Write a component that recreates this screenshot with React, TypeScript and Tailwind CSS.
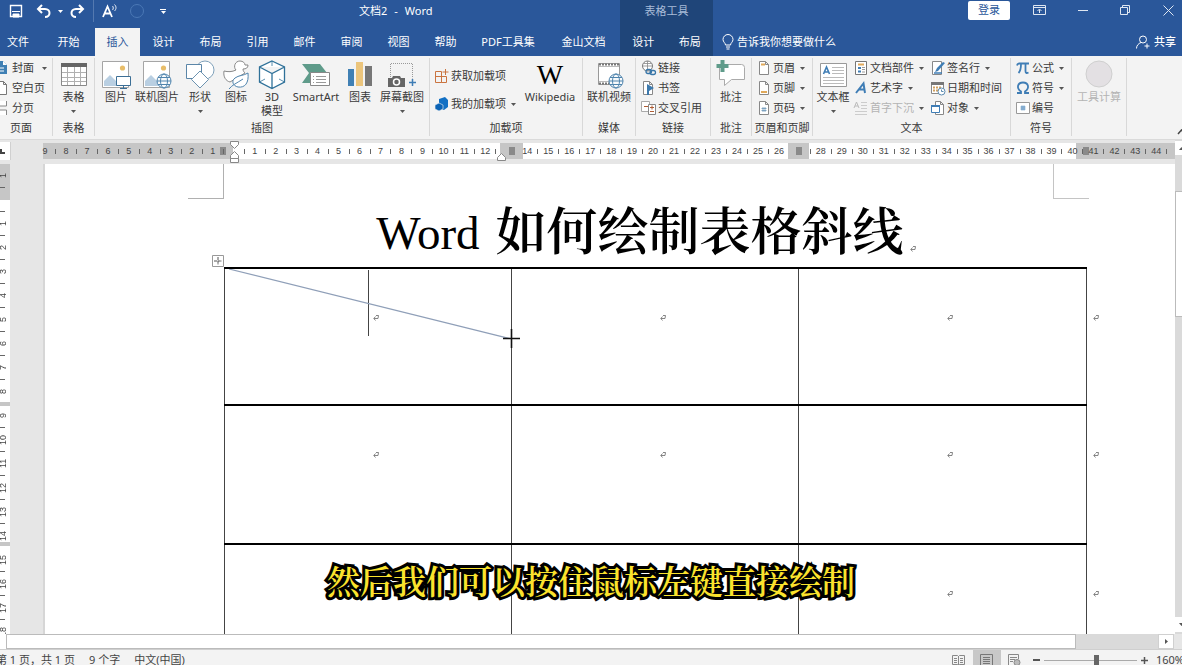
import type { ReactNode } from 'react';
import { clsx } from 'clsx';

const Caret = ({ className }: { className?: string }) => (
  <svg viewBox="0 0 5 3" className={clsx('h-[3px] w-[5px] shrink-0', className)} fill="#555">
    <path d="M0 0h5L2.5 3z" />
  </svg>
);

function Icon({ size = 'small', children }: { size?: 'small' | 'big'; children: ReactNode }) {
  return (
    <svg
      viewBox={size === 'big' ? '0 0 30 30' : '0 0 16 16'}
      className={clsx('shrink-0', size === 'big' ? 'h-[30px] w-[30px]' : 'h-4 w-4')}
      fill="none"
    >
      {children}
    </svg>
  );
}

const Globe = ({ x, y, r }: { x: number; y: number; r: number }) => (
  <g stroke="#4f84ad" strokeWidth="1">
    <circle cx={x} cy={y} r={r} fill="#f7fafc" />
    <ellipse cx={x} cy={y} rx={r / 2} ry={r} />
    <path d={`M${x - r} ${y}h${2 * r}M${x - r + 1} ${y - r / 2}h${2 * r - 2}M${x - r + 1} ${y + r / 2}h${2 * r - 2}`} />
  </g>
);

const Picture = () => (
  <>
    <path d="M1.500 1.500h26v26h-26z" fill="#fff" stroke="#a5a5a5" />
    <circle cx="21.500" cy="8" r="2.600" fill="#e8bd69" />
    <path d="M3 26V21l6-6 7 7v4z" fill="#b9cfe2" />
  </>
);

const PageShape = () => <path d="M3.500 1.500h6l3 3v10h-9z M9.500 1.500v3h3" fill="#fff" stroke="#888" />;

const icons = {
  cover: (
    <Icon>
      <path d="M3 1h8l4 4v9H3z" fill="#4080b4" />
      <path d="M11 1v4h4" fill="#fff" />
      <path d="M6 8h6M6 11h6" stroke="#fff" />
    </Icon>
  ),
  blank: (
    <Icon>
      <path d="M4.500 1.500h7l3 3v10h-10zM11.500 1.500v3h3" fill="#fff" stroke="#777" />
    </Icon>
  ),
  pageBreak: (
    <Icon>
      <path d="M1.500 1v5h13V1M1.500 15v-5h13v5" fill="#fff" stroke="#888" />
    </Icon>
  ),
  table: (
    <Icon size="big">
      <path d="M2.500 3.500h25v22h-25z" fill="#fff" stroke="#888" />
      <path d="M2 3h26v4H2z" fill="#666" />
      <path d="M3 12.500h24M3 17.500h24M3 21.500h24M8.500 7v18M15.500 7v18M21.500 7v18" stroke="#b0b0b0" />
    </Icon>
  ),
  picture: (
    <Icon size="big">
      <Picture />
      <path d="M15.500 16.500h14v9h-14z" fill="#fff" stroke="#3c6f96" />
      <path d="M22.500 26v3M19 28.500h7" stroke="#3c6f96" />
    </Icon>
  ),
  onlinePicture: (
    <Icon size="big">
      <Picture />
      <Globe x={22} y={21} r={7} />
    </Icon>
  ),
  shapes: (
    <Icon size="big">
      <circle cx="20" cy="10" r="9" fill="#fff" stroke="#7ea0ba" />
      <path d="M1.500 4.500h15v14h-15z" fill="#fff" stroke="#5b86a8" />
      <path d="M15 11l8.500 8.500L15 28l-8.500-8.500z" fill="#fff" stroke="#6d93b0" />
    </Icon>
  ),
  iconSet: (
    <Icon size="big">
      <path d="M3 11c4 1 8 1 12-1-3-3-1-9 4-9 3 0 5 2 5 4h3c0 3-2 4-5 4 0 2 1 3 2 4L9 22c-4-1-7-5-6-11z" stroke="#888" fill="#fff" />
      <path d="M27 13c1 10-3 15-10 14-5-1-7-6-3-9s8-2 13-5zM8 29c3-4 8-6 14-10" stroke="#4f84ad" fill="#fff" />
    </Icon>
  ),
  model: (
    <Icon size="big">
      <path d="M15 1l12.500 6v15L15 28.500 2.500 22V7zM2.500 7L15 13.500 27.500 7M15 13.500v15" fill="#fff" stroke="#2f7199" strokeWidth="1.300" />
      <path d="M15 1v5M2.500 22L8 19M27.500 22L22 19" stroke="#2f7199" strokeWidth="0.800" />
    </Icon>
  ),
  smartArt: (
    <Icon size="big">
      <path d="M1 4h18l7 9-7 10H1l7-10z" fill="#5f9b8a" />
      <path d="M9.500 12.500h19v13h-19z" fill="#fff" stroke="#888" />
      <path d="M15 16.500h10M15 19.500h10M15 22.500h10M12 16.500h1M12 19.500h1M12 22.500h1" stroke="#999" />
    </Icon>
  ),
  chart: (
    <Icon size="big">
      <path d="M3 9h6v17H3z" fill="#4080b4" />
      <path d="M11 2h7v24h-7z" fill="#ecc57c" />
      <path d="M20 6h7v20h-7z" fill="#777" />
    </Icon>
  ),
  screenshot: (
    <Icon size="big">
      <path d="M3.500 17V3.500h22v15" stroke="#999" strokeDasharray="1 1" />
      <path d="M1 18h4l1-2h7l1 2h4v9H1z" fill="#666" />
      <circle cx="9.500" cy="22" r="3" stroke="#fff" strokeWidth="1.500" />
      <path d="M25.500 19v7M22 22.500h7" stroke="#3f7db5" strokeWidth="1.500" />
    </Icon>
  ),
  getAddin: (
    <Icon>
      <path d="M1.500 3.500h6v11h-6zM7.500 8.500h5v6h-5zM1.500 8.500h6M11.500 1v6M8.500 4h6" stroke="#ca7440" />
    </Icon>
  ),
  myAddin: (
    <Icon>
      <path d="M5 3l6-2 3 3v7l-4 3-5-2z" fill="#1270c4" />
      <path d="M1 9l4-2 4 2v4l-4 2-4-2z" fill="#0b63b5" stroke="#f3f3f3" strokeWidth="0.600" />
    </Icon>
  ),
  video: (
    <Icon size="big">
      <path d="M4.500 3.500h21v21h-21z" fill="#fff" stroke="#999" />
      <path d="M5 4.500h21M5 23.500h12" stroke="#777" strokeWidth="2" strokeDasharray="2 1" />
      <path d="M5 6.500h20M5 21.500h12" stroke="#bbb" />
      <Globe x={22} y={21} r={7} />
    </Icon>
  ),
  link: (
    <Icon>
      <circle cx="6.500" cy="6" r="5" fill="#fff" stroke="#777" />
      <path d="M1.500 6h10M6.500 1v10M3 3.500h7" stroke="#888" strokeWidth="0.800" />
      <path d="M5 11.500a2 2 0 012-2h1.500a2 2 0 010 4H7a2 2 0 01-2-2zM9 12.500a2 2 0 012-2h1.500a2 2 0 010 4H11a2 2 0 01-2-2z" stroke="#3876a8" strokeWidth="1.300" />
    </Icon>
  ),
  bookmark: (
    <Icon>
      <path d="M2.500 1.500h6l3 3v10h-9zM8.500 1.500v3h3" fill="#fff" stroke="#888" />
      <path d="M6 4l7 4-5 3v4H6z" fill="#3c79ad" />
    </Icon>
  ),
  crossRef: (
    <Icon>
      <path d="M.500 1.500h8v10h-8z" fill="#fff" stroke="#aaa" />
      <path d="M7.500 4.500h7v10h-7z" fill="#fff" stroke="#888" />
      <path d="M3 6.500h4M9 7.500h4M11 5.500v4M9 11.500h4" stroke="#b05d34" />
    </Icon>
  ),
  comment: (
    <Icon size="big">
      <path d="M3.500 4.500h22a3 3 0 013 3v12h-13l-7 6v-6h-5z" fill="#fff" stroke="#aaa" />
      <path d="M6.500 0v12M.500 6h12" stroke="#5f9b8a" strokeWidth="4" />
    </Icon>
  ),
  headerPage: (
    <Icon>
      <PageShape />
      <path d="M5 4.500h4" stroke="#e0a95a" strokeWidth="2" />
    </Icon>
  ),
  footerPage: (
    <Icon>
      <PageShape />
      <path d="M5 12h6" stroke="#e0a95a" strokeWidth="2" />
    </Icon>
  ),
  pageNumber: (
    <Icon>
      <PageShape />
      <path d="M7 7v5M9 7v5M5.500 8.500h5M5.500 10.500h5" stroke="#5b8bb0" strokeWidth="0.700" />
    </Icon>
  ),
  textBox: (
    <Icon size="big">
      <path d="M2.500 3.500h26v23h-26z" fill="#fff" stroke="#999" />
      <path d="M5.500 14L8.500 7l3 7M6.500 12h4" stroke="#3f7db5" strokeWidth="1.600" />
      <path d="M14 7.500h12M14 10.500h12M14 13.500h12M5 17.500h21M5 20.500h21M5 23.500h21" stroke="#bbb" />
    </Icon>
  ),
  parts: (
    <Icon>
      <path d="M2.500 1.500h11v13h-11z" fill="#fff" stroke="#777" />
      <path d="M5 4.500h6" stroke="#e0a95a" strokeWidth="2" />
      <path d="M5 8h3M5 11.500h3" stroke="#3f7db5" strokeWidth="2" />
      <path d="M9 7.500h3M9 9.500h3M9 12h3" stroke="#999" />
    </Icon>
  ),
  wordArt: (
    <Icon>
      <path d="M3 13L10.500 3.500 12 13M6 9.500h6" stroke="#3f7db5" strokeWidth="2" />
    </Icon>
  ),
  dropCap: (
    <Icon>
      <path d="M1 8l2.500-6L6 8M2 6h3" stroke="#bbb" />
      <path d="M8 2.500h6M8 5.500h6M8 8.500h6M2 11.500h12M2 14.500h12" stroke="#ccc" />
    </Icon>
  ),
  signature: (
    <Icon>
      <path d="M2.500 1.500h9v13h-9z" fill="#fff" stroke="#888" />
      <path d="M5 12l2-4 6-6 2 1-7 8z" fill="#3f7db5" />
      <path d="M4 13h8" stroke="#3f7db5" strokeWidth="1.500" />
    </Icon>
  ),
  dateTime: (
    <Icon>
      <path d="M1.500 2.500h12v11h-12z" fill="#fff" stroke="#888" />
      <path d="M1 2h13v3H1z" fill="#777" />
      <path d="M3 7.500h8M3 10.500h5" stroke="#d0a060" strokeWidth="2" strokeDasharray="2 1" />
      <circle cx="11.500" cy="11.500" r="3.500" fill="#fff" stroke="#5b8bb0" />
      <path d="M11.500 9.500v2h2" stroke="#5b8bb0" />
    </Icon>
  ),
  object: (
    <Icon>
      <path d="M5.500 1.500h5l3 3v10h-8zM10.500 1.500v3h3" fill="#fff" stroke="#888" />
      <path d="M1.500 5.500h8v7h-8z" fill="#fff" stroke="#3f7db5" />
      <path d="M1 6h9" stroke="#3f7db5" strokeWidth="2" />
    </Icon>
  ),
  equation: (
    <Icon>
      <path d="M2 5.500c.500-1.500 1-2 2-2h10M6 4c0 4-.5 7-2.500 9M10.500 4v7c0 2 1 2.500 3 1.500" stroke="#3f7db5" strokeWidth="1.800" />
    </Icon>
  ),
  symbol: (
    <Icon>
      <path d="M2 13h4v-1.500C1 8 2.500 2.500 8 2.500s7 5.500 2 9V13h4" stroke="#3f7db5" strokeWidth="1.800" />
    </Icon>
  ),
  numbering: (
    <Icon>
      <path d="M1.500 2.500h13v11h-13z" fill="#fff" stroke="#999" />
      <path d="M7 5.500v5M9 5.500v5M5.500 7h5M5.500 9h5" stroke="#3f7db5" strokeWidth="0.800" />
    </Icon>
  ),
  calc: (
    <Icon size="big">
      <circle cx="15" cy="14" r="13" fill="#e3e0e3" stroke="#cfcfcf" />
    </Icon>
  ),
};

type BigProps = { icon: ReactNode; label: string; second?: string; caret?: boolean; className?: string; disabled?: boolean };

function BigButton({ icon, label, second, caret, className, disabled }: BigProps) {
  return (
    <button
      type="button"
      disabled={disabled}
      className={clsx('flex flex-col items-center pt-0.5 leading-[14px] whitespace-nowrap', disabled && 'text-[#b4b4b4]', className)}
    >
      {icon}
      <span>{label}</span>
      {second && <span>{second}</span>}
      {caret && <Caret className="mt-1.5" />}
    </button>
  );
}

type SmallProps = { icon: ReactNode; label: string; caret?: boolean; disabled?: boolean; className?: string };

function SmallButton({ icon, label, caret, disabled, className = 'h-5' }: SmallProps) {
  return (
    <button
      type="button"
      disabled={disabled}
      className={clsx('flex items-center gap-px whitespace-nowrap', disabled && 'text-[#b4b4b4]', className)}
    >
      {icon}
      <span>{label}</span>
      {caret && <Caret className="ml-1" />}
    </button>
  );
}

function Group({ label, className, children }: { label?: string; className: string; children: ReactNode }) {
  return (
    <section className={clsx('mt-0.5 mb-[3px] flex shrink-0 flex-col border-r border-[#d8d8d8]', className)}>
      <div className="flex h-[66px]">{children}</div>
      <h2 className="text-center leading-4 whitespace-nowrap">{label}</h2>
    </section>
  );
}

const tabs = ['设计', '布局', '引用', '邮件', '审阅', '视图', '帮助'];

function TitleBar() {
  return (
    <div className="flex h-7 text-white">
      <div className="flex w-[359px] shrink-0 items-start">
        <div className="flex h-[22px] items-center border-r border-[#5479b0] pr-2 pl-2">
          <button type="button" aria-label="保存" className="mr-3">
            <svg viewBox="0 0 16 16" className="h-4 w-4" fill="none" stroke="#fff">
              <path d="M2.500 2.500h11v11h-11z" strokeWidth="1.400" />
              <path d="M4 8.500h8M5 11h6v3H5z" fill="#fff" />
            </svg>
          </button>
          <button type="button" aria-label="撤消">
            <svg viewBox="0 0 16 16" className="h-4 w-4" fill="none" stroke="#fff" strokeWidth="2">
              <path d="M6 2L2 6l4 4M2 6h7c6 0 6 8 0 8" />
            </svg>
          </button>
          <Caret className="mx-1.5 brightness-[4]" />
          <button type="button" aria-label="恢复">
            <svg viewBox="0 0 16 16" className="h-4 w-4" fill="none" stroke="#fff" strokeWidth="2">
              <path d="M10 2l4 4-4 4M14 6H7c-6 0-6 8 0 8" />
            </svg>
          </button>
        </div>
        <div className="flex h-[22px] items-center gap-3 pl-2">
          <button type="button" aria-label="朗读">
            <svg viewBox="0 0 16 16" className="h-4 w-4" fill="none" stroke="#fff">
              <path d="M1 14L5.500 3.500 10 14M2.500 10.500h6" strokeWidth="1.800" />
              <path d="M10.500 3c1 1 1 3 0 4M12.500 1.500c2 2 2 4.500 0 6.500" strokeWidth="0.900" />
            </svg>
          </button>
          <span className="h-[14px] w-[14px] rounded-full border border-[#4a78b5]" />
          <button type="button" aria-label="自定义" className="ml-1 flex flex-col items-center gap-px">
            <span className="h-px w-1.5 bg-white" />
            <Caret className="brightness-[4]" />
          </button>
        </div>
      </div>
      <h1 className="flex w-[261px] shrink-0 gap-[7px] text-[11px] leading-[22px]">
        <span>文档2</span>
        <span>-</span>
        <span>Word</span>
      </h1>
      <p className="w-[93px] shrink-0 bg-[#1f4579] text-center leading-[22px] text-[#a9bcd8]">表格工具</p>
      <div className="flex flex-1 items-start justify-end">
        <button type="button" className="mt-px mr-2 h-[19px] w-[42px] rounded-xs bg-white text-[#2a579a]">
          登录
        </button>
        <div className="-mr-2 flex h-[21px] items-center">
          <button type="button" aria-label="功能区显示选项" className="flex w-[43px] justify-center">
            <svg viewBox="0 0 13 11" className="h-[11px] w-[13px]" fill="none" stroke="#dfe7f2">
              <path d="M.500.500h12v9H.500zM.500 2.500h12M6.500 8V4.500M4.500 6l2-2 2 2" />
            </svg>
          </button>
          <button type="button" aria-label="最小化" className="flex w-[43px] justify-center">
            <span className="h-px w-[10px] bg-[#dfe7f2]" />
          </button>
          <button type="button" aria-label="还原" className="flex w-[43px] justify-center">
            <svg viewBox="0 0 11 11" className="h-[11px] w-[11px]" fill="none" stroke="#dfe7f2">
              <path d="M.500 2.500h7v7h-7zM2.500 2.500v-2h7v7h-2" />
            </svg>
          </button>
          <button type="button" aria-label="关闭" className="flex w-[43px] justify-center">
            <svg viewBox="0 0 11 11" className="h-[11px] w-[11px]" fill="none" stroke="#dfe7f2">
              <path d="M.500.500l10 10M10.500.500l-10 10" />
            </svg>
          </button>
        </div>
      </div>
    </div>
  );
}

function TabBar() {
  return (
    <nav className="flex h-7 whitespace-nowrap text-white">
      <button type="button" className="-ml-1.5 w-12 shrink-0">文件</button>
      <button type="button" className="w-[53px] shrink-0">开始</button>
      <button type="button" className="w-[45px] shrink-0 bg-[#f3f3f3] text-[#2a579a]">插入</button>
      {tabs.map((tab) => (
        <button type="button" key={tab} className="w-[47px] shrink-0">
          {tab}
        </button>
      ))}
      <button type="button" className="w-[78px] shrink-0">PDF工具集</button>
      <button type="button" className="w-[73px] shrink-0">金山文档</button>
      <div className="flex w-[93px] shrink-0 bg-[#1f4579]">
        <button type="button" className="flex-1">设计</button>
        <button type="button" className="flex-1">布局</button>
      </div>
      <button type="button" className="ml-2 flex items-center gap-0.5">
        <svg viewBox="0 0 14 16" className="h-4 w-[14px]" fill="none" stroke="#fff">
          <path d="M4.500 11c0-2-2.500-3-2.500-5.500a5 5 0 0110 0C12 8 9.500 9 9.500 11zM5 13h4M5.500 15h3" />
        </svg>
        告诉我你想要做什么
      </button>
      <button type="button" className="mr-1.5 ml-auto flex items-center gap-1">
        <svg viewBox="0 0 14 14" className="h-[14px] w-[14px]" fill="none" stroke="#fff">
          <circle cx="7" cy="4.500" r="3.500" />
          <path d="M.500 13.500c0-3 2-5 4.500-6M8.500 11h5M11 8.500v5" />
        </svg>
        <span className="font-medium">共享</span>
      </button>
    </nav>
  );
}

function Ribbon() {
  return (
    <div className="flex h-[84px] border-b border-[#dadada] bg-[#f3f3f3] text-[#3a3a3a]">
      <Group label="页面" className="w-[53px] -indent-[10px]">
        <div className="-ml-2 indent-0 [&>button]:gap-1">
          <SmallButton icon={icons.cover} label="封面" caret />
          <SmallButton icon={icons.blank} label="空白页" />
          <SmallButton icon={icons.pageBreak} label="分页" />
        </div>
      </Group>
      <Group label="表格" className="w-[42px]">
        <BigButton icon={icons.table} label="表格" caret className="w-full" />
      </Group>
      <Group label="插图" className="w-[335px]">
        <BigButton icon={icons.picture} label="图片" className="ml-[3px] w-9" />
        <BigButton icon={icons.onlinePicture} label="联机图片" className="w-[46px]" />
        <BigButton icon={icons.shapes} label="形状" caret className="w-10" />
        <BigButton icon={icons.iconSet} label="图标" className="w-8" />
        <BigButton icon={icons.model} label="3D" second="模型" className="w-10" />
        <BigButton icon={icons.smartArt} label="SmartArt" className="w-12" />
        <BigButton icon={icons.chart} label="图表" className="w-10" />
        <BigButton icon={icons.screenshot} label="屏幕截图" caret className="w-11" />
      </Group>
      <Group label="加载项" className="w-[153px]">
        <div className="w-[92px] pt-1 pl-1">
          <SmallButton icon={icons.getAddin} label="获取加载项" className="h-7" />
          <SmallButton icon={icons.myAddin} label="我的加载项" caret className="h-7" />
        </div>
        <BigButton
          icon={<span className="h-[30px] font-['Liberation_Serif',serif] text-[28px] leading-[30px] text-black">W</span>}
          label="Wikipedia"
          className="w-14"
        />
      </Group>
      <Group label="媒体" className="w-[53px]">
        <BigButton icon={icons.video} label="联机视频" className="w-full" />
      </Group>
      <Group label="链接" className="w-[75px]">
        <div className="pl-[5px]">
          <SmallButton icon={icons.link} label="链接" />
          <SmallButton icon={icons.bookmark} label="书签" />
          <SmallButton icon={icons.crossRef} label="交叉引用" />
        </div>
      </Group>
      <Group label="批注" className="w-[41px]">
        <BigButton icon={icons.comment} label="批注" className="w-full" />
      </Group>
      <Group label="页眉和页脚" className="w-[61px]">
        <div className="pl-1">
          <SmallButton icon={icons.headerPage} label="页眉" caret />
          <SmallButton icon={icons.footerPage} label="页脚" caret />
          <SmallButton icon={icons.pageNumber} label="页码" caret />
        </div>
      </Group>
      <Group label="文本" className="w-[198px]">
        <BigButton icon={icons.textBox} label="文本框" caret className="w-10" />
        <div className="w-[77px]">
          <SmallButton icon={icons.parts} label="文档部件" caret />
          <SmallButton icon={icons.wordArt} label="艺术字" caret />
          <SmallButton icon={icons.dropCap} label="首字下沉" caret disabled />
        </div>
        <div>
          <SmallButton icon={icons.signature} label="签名行" caret />
          <SmallButton icon={icons.dateTime} label="日期和时间" />
          <SmallButton icon={icons.object} label="对象" caret />
        </div>
      </Group>
      <Group label="符号" className="w-[61px]">
        <div className="pl-1">
          <SmallButton icon={icons.equation} label="公式" caret />
          <SmallButton icon={icons.symbol} label="符号" caret />
          <SmallButton icon={icons.numbering} label="编号" />
        </div>
      </Group>
      <Group className="w-[55px]">
        <BigButton icon={icons.calc} label="工具计算" disabled className="w-full" />
      </Group>
      <button type="button" aria-label="折叠功能区" className="-mr-1 ml-auto self-end pb-1">
        <svg viewBox="0 0 9 6" className="h-1.5 w-[9px]" fill="none" stroke="#444" strokeWidth="1.500">
          <path d="M1 5l3.500-4L8 5" />
        </svg>
      </button>
    </div>
  );
}

const columnMarks = [0, 13, 27];
const rulerNumbers = Array.from({ length: 54 }, (_, i) => i - 9);

const RulerGrip = ({ className }: { className?: string }) => <span className={clsx('h-2 w-1.5 bg-[#8a8a8a]', className)} />;

function HorizontalRuler() {
  return (
    <div className="flex h-6 shrink-0 bg-[#e6e6e6] pt-[3px]">
      <button type="button" aria-label="制表符" className="mr-8 -mt-px flex h-[18px] w-[11px] items-center border-r border-[#d0d0d0] bg-white">
        <svg viewBox="0 0 5 5" className="h-[5px] w-[5px]" fill="none" stroke="#444" strokeWidth="2">
          <path d="M1 0v4h4" />
        </svg>
      </button>
      <div className="relative h-4 flex-1">
        <div className="flex h-full">
          <div className="flex flex-[190] items-center justify-end bg-[#c6c6c6]"><RulerGrip className="mr-[7px]" /></div>
          <div className="flex-[267] bg-white" />
          <div className="flex flex-[23] items-center justify-center bg-[#c6c6c6]"><RulerGrip /></div>
          <div className="flex-[265] bg-white" />
          <div className="flex flex-[21] items-center justify-center bg-[#c6c6c6]"><RulerGrip /></div>
          <div className="flex-[267] bg-white" />
          <div className="flex flex-[99] items-center bg-[#c6c6c6]"><RulerGrip className="ml-[7px]" /></div>
        </div>
        <div className="absolute inset-y-0 right-2 -left-2 flex font-['Liberation_Sans',sans-serif] text-[9px] leading-4 text-[#444]">
          {rulerNumbers.map((n) => (
            <span key={n} className="flex flex-1 items-center">
              <span className="flex-1 text-center">{columnMarks.includes(n) ? '' : Math.abs(n)}</span>
              <span className={clsx('h-[5px] w-px', n === 13 || n === 26 ? 'bg-transparent' : 'bg-[#666]')} />
            </span>
          ))}
        </div>
        <svg viewBox="0 0 9 24" className="absolute -top-[3px] left-[187px] h-6 w-[9px]" fill="#fff" stroke="#888">
          <path d="M.500 1.500h8v3l-4 4-4-4zM.500 18.500v-3l4-4 4 4v3zM.500 18.500h8v4h-8z" />
        </svg>
        <svg viewBox="0 0 9 8" className="absolute top-[10px] left-[454px] h-2 w-[9px]" fill="#fff" stroke="#888">
          <path d="M.500 7.500v-3l4-4 4 4v3z" />
        </svg>
      </div>
    </div>
  );
}

function VerticalRuler() {
  return (
    <div className="relative w-[10px] shrink-0 overflow-hidden bg-white">
      <div className="flex h-full flex-col">
        <div className="h-9 bg-[#c6c6c6]" />
        <div className="mt-[202px] h-1 bg-[#c6c6c6]" />
        <div className="mt-[136px] h-1 bg-[#c6c6c6]" />
      </div>
      <div className="absolute inset-x-0 top-0 font-['Liberation_Sans',sans-serif] text-[9px] leading-[10px] text-[#444]">
        {Array.from({ length: 20 }, (_, i) => i - 1).map((n) => (
          <div key={n} className="flex h-6 flex-col">
            <span className="-ml-0.5 flex w-[10px] flex-1 rotate-180 items-center justify-center [writing-mode:vertical-rl]">
              {n === 0 ? '' : Math.abs(n)}
            </span>
            <span className={clsx('h-px w-[5px]', n === 8 || n === 14 ? 'bg-transparent' : 'bg-[#666]')} />
          </div>
        ))}
      </div>
    </div>
  );
}

const ParagraphMark = ({ className }: { className?: string }) => (
  <svg viewBox="0 0 6 6" className={clsx('h-1.5 w-1.5', className)} fill="none" stroke="#777" strokeWidth="0.900">
    <path d="M3 .500h2.500L5 3.500H1M2.500 1.500L.800 3.500l1.700 2" />
  </svg>
);

const rowHeights = ['h-[137px]', 'h-[139px]', 'h-[139px]'];

function DocumentPage() {
  return (
    <article className="relative ml-[33px] flex-1 overflow-hidden border-l-2 border-[#d6d6d6] bg-white">
      <div className="flex h-[35px] justify-between pr-[86px] pl-[143px]">
        <span className="w-9 border-r border-b border-[#b0b0b0]" />
        <span className="w-9 border-b border-l border-[#c4c4c4]" />
      </div>
      <h2 className="flex h-[68px] items-center justify-center pr-[107px] pl-[179px] text-[51px] leading-[68px] whitespace-nowrap text-black">
        <span className="mr-4 font-['Liberation_Serif',serif] text-[47px]">Word</span>
        <span className="font-['Liberation_Serif','Noto_Serif_CJK_SC','Noto_Sans_CJK_SC',serif] font-semibold">如何绘制表格斜线</span>
        <ParagraphMark className="mt-8 ml-1.5" />
      </h2>
      <div className="relative ml-[179px]">
        <table className="w-full table-fixed border-collapse">
          <colgroup>
            <col />
            <col />
            <col />
            <col className="w-[89px]" />
          </colgroup>
          <tbody>
            {rowHeights.map((height, row) => (
              <tr key={row} className={height}>
                {[0, 1, 2].map((col) => (
                  <td key={col} className="relative border-x border-t-2 border-x-[#444] border-t-black p-0 align-top">
                    <ParagraphMark className="mx-auto mt-[46px] translate-x-2" />
                    {row === 0 && col === 0 && (
                      <>
                        <span className="absolute top-px left-1/2 h-[66px] w-px bg-[#444]" />
                        <svg viewBox="0 0 288 70" preserveAspectRatio="none" className="absolute top-0 left-0 h-[70px] w-full" fill="none" stroke="#8f9fb8">
                          <path d="M4 0L288 70" strokeWidth="1.200" />
                        </svg>
                      </>
                    )}
                    {row === 0 && col === 1 && (
                      <svg viewBox="0 0 17 19" className="absolute top-[60px] -left-[9px] h-[19px] w-[17px]" stroke="#111" strokeWidth="1.600">
                        <path d="M8.500 0v19M0 9.500h17" />
                      </svg>
                    )}
                  </td>
                ))}
                <td className="p-0 align-top">
                  <ParagraphMark className="mt-[47px] ml-1.5" />
                </td>
              </tr>
            ))}
          </tbody>
        </table>
        <svg viewBox="0 0 12 12" className="absolute -top-3 -left-3 h-3 w-3" fill="#fff" stroke="#999">
          <path d="M.500.500h11v11H.500z" />
          <path d="M6 2v8M2 6h8" stroke="#555" strokeDasharray="3 .8" />
        </svg>
      </div>
    </article>
  );
}

function StatusBar() {
  return (
    <footer className="flex h-[15px] shrink-0 overflow-hidden bg-[#f3f3f3] leading-5 whitespace-nowrap text-[#444]">
      <span className="-ml-1">第 1 页，共 1 页</span>
      <span className="ml-3.5">9 个字</span>
      <span className="ml-3.5">中文(中国)</span>
      <div className="ml-auto flex h-5 items-center">
        <button type="button" aria-label="阅读视图" className="flex w-7 justify-center">
          <svg viewBox="0 0 13 12" className="h-3 w-[13px]" fill="none" stroke="#888">
            <path d="M.500 1.500h5l1 1 1-1h5v9h-5l-1 1-1-1h-5zM6.500 2v9M2 4.500h3M2 6.500h3M2 8.500h3M8 4.500h3M8 6.500h3M8 8.500h3" />
          </svg>
        </button>
        <button type="button" aria-label="页面视图" className="flex h-full w-7 items-center justify-center bg-[#c8c8c8]">
          <svg viewBox="0 0 13 12" className="h-3 w-[13px]" fill="none" stroke="#777">
            <path d="M.500.500h12v11H.500zM3 3.500h7M3 5.500h7M3 7.500h7M3 9.500h7" />
          </svg>
        </button>
        <button type="button" aria-label="Web 版式视图" className="flex w-7 justify-center">
          <svg viewBox="0 0 13 12" className="h-3 w-[13px]" fill="none" stroke="#888">
            <path d="M6 11.500H.500V.500h10V5M2 3.500h7M2 5.500h5M2 7.500h3" />
            <circle cx="9" cy="8.500" r="3" fill="#bbb" />
          </svg>
        </button>
        <button type="button" aria-label="缩小" className="ml-1 h-0.5 w-[7px] bg-[#555]" />
        <input
          type="range"
          aria-label="缩放级别"
          min={0}
          max={100}
          defaultValue={57}
          className="mx-1 h-[10px] w-[93px] appearance-none bg-[linear-gradient(#aaa,#aaa)] bg-[length:100%_1px] bg-center bg-no-repeat [&::-webkit-slider-thumb]:h-[10px] [&::-webkit-slider-thumb]:w-[5px] [&::-webkit-slider-thumb]:appearance-none [&::-webkit-slider-thumb]:bg-[#666]"
        />
        <button type="button" aria-label="放大">
          <svg viewBox="0 0 7 7" className="h-[7px] w-[7px]" stroke="#555" strokeWidth="1.500">
            <path d="M0 3.500h7M3.500 0v7" />
          </svg>
        </button>
        <span className="-mr-0.5 ml-2">160%</span>
      </div>
    </footer>
  );
}

export default function App() {
  return (
    <div className="relative flex h-screen flex-col overflow-hidden bg-[#e6e6e6] font-['Noto_Sans','Noto_Sans_CJK_SC',sans-serif] text-[11px]">
      <header className="shrink-0">
        <div className="bg-[#2a579a]">
          <TitleBar />
          <TabBar />
        </div>
        <Ribbon />
      </header>
      <main className="flex min-h-0 flex-1">
        <div className="flex min-w-0 flex-1 flex-col">
          <HorizontalRuler />
          <div className="flex min-h-0 flex-1">
            <VerticalRuler />
            <DocumentPage />
          </div>
        </div>
        <div className="flex w-[7px] shrink-0 flex-col overflow-hidden bg-[#dadada]">
          <button type="button" aria-label="向上滚动" className="mt-px flex h-[14px] items-center bg-white pl-1">
            <Caret className="rotate-180" />
          </button>
          <div className="mt-9 h-[126px] border border-r-0 border-[#bbb] bg-white" />
          <button type="button" aria-label="向下滚动" className="mt-auto mb-0.5 flex h-[15px] items-center bg-white pl-1">
            <Caret />
          </button>
        </div>
      </main>
      <div className="flex h-4 shrink-0 border-b border-[#cfcfcf] bg-[#dadada]">
        <div className="w-1.5 bg-white" />
        <div className="mr-[82px] flex-1 border border-[#bbb] bg-white" />
        <button type="button" aria-label="向右滚动" className="flex w-4 items-center justify-center border border-[#d0d0d0] bg-white">
          <Caret className="-rotate-90" />
        </button>
        <div className="w-2 bg-[#e6e6e6]" />
      </div>
      <StatusBar />
      <p className="pointer-events-none absolute inset-x-0 bottom-[61px] text-center font-['Noto_Serif_CJK_SC','Noto_Sans_CJK_SC',serif] text-[33px] leading-[48px] font-semibold whitespace-nowrap text-[#fbe32d] [-webkit-text-stroke:6px_#000] [paint-order:stroke_fill]">
        然后我们可以按住鼠标左键直接绘制
      </p>
    </div>
  );
}
